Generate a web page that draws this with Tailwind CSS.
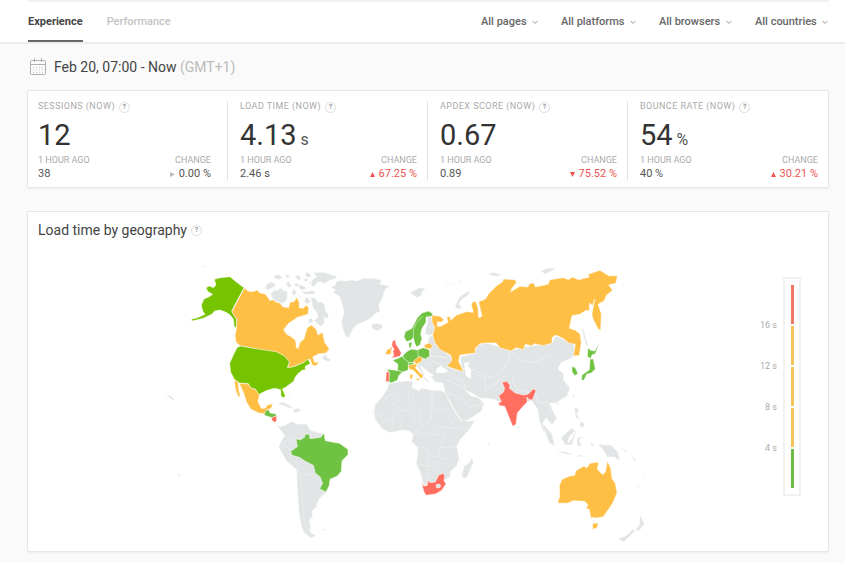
<!DOCTYPE html>
<html lang="en">
    <head>
        <meta charset="UTF-8" />
        <meta name="viewport" content="width=device-width, initial-scale=1.0" />
        <title>Experience</title>
        <script src="https://cdn.jsdelivr.net/npm/@tailwindcss/browser@4"></script>
    </head>
    <body class="min-h-screen bg-[#fafafa] font-['Roboto',sans-serif] text-[#444]">
        <header class="border-b-2 border-[#ececec] bg-white px-4 sm:pl-7">
            <div class="border-t-2 border-[#f1f1f1]"></div>
            <div class="flex h-10 items-stretch justify-between">
                <nav class="flex gap-6 text-[11px] font-medium">
                    <a href="#experience" class="flex items-center border-b-2 border-[#666] pt-0.5 font-bold text-[#444]">Experience</a>
                    <a href="#performance" class="flex items-center border-b-2 border-transparent pt-0.5 text-[#c4c4c4]">Performance</a>
                </nav>
                <form class="flex items-center gap-[22px] text-[11px] font-medium text-[#666]">
                    <label class="relative flex items-center">
                        <select aria-label="Pages" class="appearance-none bg-transparent pr-3">
                            <option>All pages</option>
                        </select>
                        <svg class="pointer-events-none absolute right-0 size-2" viewBox="0 0 8 8" fill="none" stroke="#999"><path d="M1.5 3 4 5.5 6.5 3" /></svg>
                    </label>
                    <label class="relative flex items-center">
                        <select aria-label="Platforms" class="appearance-none bg-transparent pr-3">
                            <option>All platforms</option>
                        </select>
                        <svg class="pointer-events-none absolute right-0 size-2" viewBox="0 0 8 8" fill="none" stroke="#999"><path d="M1.5 3 4 5.5 6.5 3" /></svg>
                    </label>
                    <label class="relative flex items-center">
                        <select aria-label="Browsers" class="appearance-none bg-transparent pr-3">
                            <option>All browsers</option>
                        </select>
                        <svg class="pointer-events-none absolute right-0 size-2" viewBox="0 0 8 8" fill="none" stroke="#999"><path d="M1.5 3 4 5.5 6.5 3" /></svg>
                    </label>
                    <label class="relative flex items-center">
                        <select aria-label="Countries" class="appearance-none bg-transparent pr-3">
                            <option>All countries</option>
                        </select>
                        <svg class="pointer-events-none absolute right-0 size-2" viewBox="0 0 8 8" fill="none" stroke="#999"><path d="M1.5 3 4 5.5 6.5 3" /></svg>
                    </label>
                </form>
            </div>
        </header>

        <main class="px-4 pb-3 sm:pl-[27px]">
            <div class="flex h-[46px] items-center gap-2 pl-[3px] text-sm">
                <svg class="h-[18px] w-4" viewBox="0 0 16 18" fill="none" stroke="#b0b0b0">
                    <rect x=".5" y="2.5" width="15" height="14" rx="1" />
                    <path d="M.5 6.5h15M4.500 0v4M11.500 0v4" />
                    <path d="M3 9.500h10M3 12h10M3 14.500h10" stroke="#ccc" stroke-dasharray="1 2" />
                </svg>
                <p>Feb 20, 07:00 - Now <span class="text-[#bbb]">(GMT+1)</span></p>
            </div>

            <section class="grid grid-cols-2 rounded-xs border border-[#e6e6e6] bg-white pt-2.5 pb-1.5 shadow-xs sm:grid-cols-4 sm:divide-x sm:divide-[#e4e4e4]">
                <article class="pr-4 pl-2.5">
                    <h2 class="flex h-3 items-center gap-1 text-[9px] tracking-wider text-[#aaa]">SESSIONS (NOW)
                        <button type="button" aria-label="About sessions" class="size-[11px] rounded-full border border-[#ddd] text-[7px] leading-none font-bold text-[#999]">?</button>
                    </h2>
                    <p class="mt-1 text-[29px] leading-9 text-[#333]">12</p>
                    <dl class="flex justify-between text-[11px] leading-[14px] text-[#555]">
                        <div><dt class="text-[9px] leading-[14px] text-[#aaa]">1 HOUR AGO</dt><dd>38</dd></div>
                        <div class="text-right"><dt class="text-[9px] leading-[14px] text-[#aaa]">CHANGE</dt><dd><svg class="mr-1 inline size-[5px] align-middle" viewBox="0 0 6 6" fill="#bbb"><path d="M0 0 6 3 0 6Z" /></svg>0.00 %</dd></div>
                    </dl>
                </article>
                <article class="pr-2.5 pl-3">
                    <h2 class="flex h-3 items-center gap-1 text-[9px] tracking-wider text-[#aaa]">LOAD TIME (NOW)
                        <button type="button" aria-label="About load time" class="size-[11px] rounded-full border border-[#ddd] text-[7px] leading-none font-bold text-[#999]">?</button>
                    </h2>
                    <p class="mt-1 flex items-baseline gap-1 text-[29px] leading-9 text-[#333]">4.13 <span class="text-base leading-5 text-[#555]">s</span></p>
                    <dl class="flex justify-between text-[11px] leading-[14px] text-[#555]">
                        <div><dt class="text-[9px] leading-[14px] text-[#aaa]">1 HOUR AGO</dt><dd>2.46 s</dd></div>
                        <div class="text-right"><dt class="text-[9px] leading-[14px] text-[#aaa]">CHANGE</dt><dd class="text-[#ee5551]"><svg class="mr-1 inline size-[5px] align-middle" viewBox="0 0 6 6" fill="currentColor"><path d="M0 6 3 0 6 6Z" /></svg>67.25 %</dd></div>
                    </dl>
                </article>
                <article class="pr-2.5 pl-3">
                    <h2 class="flex h-3 items-center gap-1 text-[9px] tracking-wider text-[#aaa]">APDEX SCORE (NOW)
                        <button type="button" aria-label="About apdex score" class="size-[11px] rounded-full border border-[#ddd] text-[7px] leading-none font-bold text-[#999]">?</button>
                    </h2>
                    <p class="mt-1 text-[29px] leading-9 text-[#333]">0.67</p>
                    <dl class="flex justify-between text-[11px] leading-[14px] text-[#555]">
                        <div><dt class="text-[9px] leading-[14px] text-[#aaa]">1 HOUR AGO</dt><dd>0.89</dd></div>
                        <div class="text-right"><dt class="text-[9px] leading-[14px] text-[#aaa]">CHANGE</dt><dd class="text-[#ee5551]"><svg class="mr-1 inline size-[5px] align-middle" viewBox="0 0 6 6" fill="currentColor"><path d="M0 0H6L3 6Z" /></svg>75.52 %</dd></div>
                    </dl>
                </article>
                <article class="pr-2.5 pl-3">
                    <h2 class="flex h-3 items-center gap-1 text-[9px] tracking-wider text-[#aaa]">BOUNCE RATE (NOW)
                        <button type="button" aria-label="About bounce rate" class="size-[11px] rounded-full border border-[#ddd] text-[7px] leading-none font-bold text-[#999]">?</button>
                    </h2>
                    <p class="mt-1 flex items-baseline gap-1 text-[29px] leading-9 text-[#333]">54 <span class="text-base leading-5 text-[#555]">%</span></p>
                    <dl class="flex justify-between text-[11px] leading-[14px] text-[#555]">
                        <div><dt class="text-[9px] leading-[14px] text-[#aaa]">1 HOUR AGO</dt><dd>40 %</dd></div>
                        <div class="text-right"><dt class="text-[9px] leading-[14px] text-[#aaa]">CHANGE</dt><dd class="text-[#ee5551]"><svg class="mr-1 inline size-[5px] align-middle" viewBox="0 0 6 6" fill="currentColor"><path d="M0 6 3 0 6 6Z" /></svg>30.21 %</dd></div>
                    </dl>
                </article>
            </section>

            <section class="mt-[23px] rounded-xs border border-[#e6e6e6] bg-white pt-2 pr-[27px] pb-1.5 pl-2.5 shadow-xs">
                <h2 class="flex h-5 items-center gap-1 text-sm">Load time by geography
                    <button type="button" aria-label="About load time by geography" class="size-[11px] rounded-full border border-[#ddd] text-[7px] leading-none font-bold text-[#999]">?</button>
                </h2>
                <div class="mt-5 flex items-start">
                    <svg class="min-w-0 flex-1" viewBox="38 260 722 285" role="img" aria-label="World map of load times" stroke="#fff" stroke-width="1" stroke-linejoin="round">
                        <!-- Asia and eastern Europe -->
                        <g fill="#e2e5e6" stroke-width=".5">
                            <path d="M429 337 436 334 442 350 452 357 453 362 447 367 462 371 460 357 475 353 477 345 487 343 500 347 510 351 523 347 545 344 552 342 556 336 567 341 574 344 575 353 572 358 565 361 561 363 558 369 564 374 563 379 570 388 567 396 556 403 550 403 553 411 557 418 552 425 546 418 543 423 549 435 543 431 539 420 538 410 532 401 524 402 500 402 493 399 480 398 470 392 466 391 471 396 477 397 484 403 482 411 463 423 454 409 445 393 443 383 434 382 432 377 428 377 429 383 425 380 420 370 416 365 422 361 419 356 429 357 430 349 427 346Z" />
                            <path d="M568 443 572 439 575 431 569 437ZM542 423 546 427 552 434 555 446 549 443ZM555 450 567 452 574 455 565 454ZM561 438 571 428 576 431 572 445 565 445ZM577 438 584 436 579 440 582 446 577 446ZM574 407 579 409 577 415 581 420 576 418ZM581 421 585 424 583 428 579 425ZM556 404 559 402 559 405ZM573 393 575 396 573 398ZM518 425 520 427 518 429ZM598 444 604 445 611 445 618 452 620 461 614 457 607 457 604 451ZM590 443 594 444 592 447ZM574 456 581 455 585 457ZM622 448 628 452 626 453Z" />
                        </g>
                        <g fill="none" stroke="#f0f2f2" stroke-width=".7">
                            <path d="M430 346 442 345M430 356 451 358M425 365 433 361 442 366M427 350 436 353M510 351 518 359 532 363 545 358 555 354M460 368 475 370 488 378 500 374 508 362 510 351M473 373 485 379 486 390 500 380 507 374M452 378 463 381 466 391M447 379 456 384 470 393M512 376 516 389 526 392 533 394M535 394 539 403 547 402 552 411M447 393 458 397 470 407 484 403" />
                            <path fill="#fff" d="M437 368 441 366 447 370 448 372 443 373 437 373 436 371ZM464 363 470 362 468 366 471 370 471 379 466 376 465 370ZM420 365 425 378 430 382 428 377 433 376 434 375 430 373Z" stroke="none" />
                        </g>

                        <!-- North America -->
                        <g transform="translate(180 255) scale(.33333)" fill="#e2e5e6" stroke-width="1.500">
                            <path d="M254 100 262 86 274 80 288 88 278 98 264 106ZM272 116 284 104 292 108 300 98 312 108 322 108 322 134 308 146 290 140 278 132ZM280 64 294 58 308 66 298 74 286 72ZM316 58 330 62 326 70 318 68ZM316 84 326 80 336 94 326 98ZM344 62 358 60 364 72 354 76ZM340 88 354 84 358 92 350 96ZM340 102 352 110 344 122 334 116ZM356 88 370 92 380 100 368 106 356 100ZM360 108 382 110 394 106 408 112 400 118 374 118ZM372 72 384 70 384 78 374 80ZM376 52 390 54 394 64 384 68 376 62ZM400 52 430 52 450 58 474 66 462 72 448 76 436 86 420 80 408 86 404 96 392 90 396 74 410 66ZM388 78 396 82 390 94ZM374 130 382 126 392 138 386 146 374 144ZM392 126 408 130 414 142 426 140 434 150 436 166 446 180 444 192 432 188 434 204 424 214 412 208 402 196 414 188 410 172 398 158ZM384 192 396 190 400 200 388 206ZM352 116 362 124 360 130ZM426 308 438 296 442 308 454 314 446 320 430 314ZM294 446 308 440 330 452 344 462 326 458ZM338 466 354 458 364 468 344 474ZM320 418 334 432 328 430ZM64 34 74 32 74 38ZM154 230 164 246 158 242ZM14 202 22 200 20 204ZM384 468 386 484 384 484Z" />
                            <path fill="#76c400" d="M103 73 122 68 150 65 168 80 192 98 155 168 164 184 170 192 170 218 163 216 160 192 148 178 138 172 120 165 104 168 95 178 70 190 36 198 34 193 52 188 75 178 68 168 64 150 72 132 90 124 98 118 84 110 78 98 88 93 100 98 108 90Z" />
                            <path fill="#ffbf44" d="M193 99 204 108 215 110 232 106 240 114 256 117 264 128 270 137 278 134 290 142 300 144 308 155 326 158 330 142 342 140 350 127 357 140 358 158 370 160 378 150 386 158 384 178 366 183 352 187 340 196 326 205 311 224 320 238 335 246 347 257 349 278 355 280 360 262 372 252 376 236 382 218 394 210 408 222 414 240 428 232 434 262 448 282 438 294 415 297 398 306 404 322 418 322 408 333 396 330 390 312 375 320 345 333 322 340 328 322 310 302 288 292 240 284 180 272 168 262 165 240 170 218 170 190 164 184 156 170Z" />
                            <path fill="#76c400" d="M172 277 182 273 240 283 288 290 312 302 328 320 322 339 345 334 372 322 384 312 391 326 376 334 376 344 366 346 352 358 344 370 342 378 318 396 307 402 316 422 312 428 303 424 302 404 284 400 262 406 244 414 236 420 226 402 212 400 205 386 178 384 164 374 152 352 149 325 160 300Z" />
                            <path fill="#ffbf44" d="M178 385 205 387 213 399 226 403 238 420 234 440 244 460 256 460 262 450 278 446 274 460 262 464 256 476 236 474 212 462 200 442 190 412ZM163 375 174 380 176 400 181 426 174 424 166 402Z" />
                            <path fill="#6fc242" d="M258 466 267 464 270 474 286 476 290 484 276 488 262 484 252 480Z" />
                            <path fill="#ff6e5e" d="M274 488 290 483 290 496 284 503 276 496Z" />
                        </g>

                        <!-- South America -->
                        <g transform="translate(250 410) scale(.33333)" fill="#e2e5e6" stroke-width="1.500">
                            <path d="M74 38 90 50 104 46 126 34 140 42 170 42 180 60 212 70 222 72 240 208 230 246 212 262 202 278 200 290 186 304 188 320 178 330 182 350 180 366 200 378 182 384 160 366 152 340 146 300 142 240 140 180 110 154 86 112 92 96 104 76ZM212 358 228 356 222 362ZM38 94 44 92 44 98Z" />
                            <path fill="none" stroke="#f0f2f2" d="M108 82 140 98M96 104 120 118M138 146 144 182 152 196 190 190 212 216M150 200 156 260 162 330 178 364M180 60 186 84M202 68 204 84M210 236 232 246" />
                            <path fill="#6fc242" d="M138 86 150 90 164 82 164 74 178 72 180 86 212 82 222 70 226 92 246 96 268 100 294 118 294 134 276 152 274 184 262 198 240 208 238 226 228 246 209 236 218 220 210 200 196 190 190 166 166 154 148 142 126 136 122 124 142 110Z" />
                        </g>

                        <!-- Greenland and western Europe -->
                        <g transform="translate(320 255) scale(.33333)" fill="#e2e5e6" stroke-width="1.500">
                            <path d="M30 95 45 92 48 80 62 76 80 78 95 74 110 78 130 70 160 70 185 76 180 88 210 92 195 104 190 122 182 140 176 152 182 170 168 174 152 190 130 202 112 208 98 222 86 250 76 242 68 222 64 200 72 172 66 148 58 124 40 114 46 104ZM152 210 168 204 188 210 186 220 172 228 158 222ZM270 112 286 104 298 98 318 100 306 110 304 122 290 128 280 120ZM376 92 386 88 384 94ZM396 84 406 82 402 88ZM412 80 424 78 420 84ZM448 106 432 116 416 128 410 144 404 156 420 164 424 154 416 148 424 134 448 118ZM322 186 336 184 342 216 346 232 328 242 316 236 316 222 322 208Z" />
                            <path fill="#6fc242" d="M338 176 326 168 306 174 292 188 282 208 276 220 256 230 252 246 260 260 272 256 280 248 284 264 290 276 300 270 306 250 302 238 306 220 318 202 318 186 336 184ZM266 264 276 260 274 276 268 280Z" />
                            <path fill="none" d="M306 184 288 206 280 224 280 250" />
                            <path fill="#ff6e5e" d="M218 258 226 254 228 268 236 280 244 294 240 304 214 309 222 300 218 290 222 284 215 270ZM208 280 216 276 216 286Z" />
                            <path fill="#ffbf44" d="M200 284 214 280 214 296 196 300Z" />
                            <path fill="#6fc242" d="M248 302 260 290 274 282 296 286 298 306 284 322 266 324 254 314Z" />
                            <path fill="#6fc242" d="M218 316 234 310 246 304 258 316 268 322 264 346 246 352 232 346 234 328ZM294 284 310 278 328 284 329 304 316 312 294 304Z" />
                            <path fill="#6fc242" d="M199 343 222 345 248 350 236 362 232 376 214 384 206 380 208 352ZM264 324 280 322 282 328 268 334Z" />
                            <path fill="#ff6e5e" d="M199 350 208 352 207 380 197 380Z" />
                            <path fill="#ffbf44" d="M280 318 298 304 308 310 304 320 290 328ZM264 332 284 326 292 330 286 338 298 352 310 362 304 372 294 360 280 346 268 342ZM270 358 278 358 277 372 270 372ZM286 372 298 370 296 378ZM312 270 328 264 338 272 332 282 316 280Z" />
                        </g>

                        <!-- Russia, Japan, Korea -->
                        <g transform="translate(420 255) scale(.33333)" fill="#e2e5e6" stroke-width="1.500">
                            <path d="M484 220 490 222 506 278 498 270ZM362 48 380 40 410 38 398 46 376 58ZM206 56 220 52 248 60 232 64 214 62ZM526 32 538 30 534 36ZM604 86 614 86 610 90Z" />
                            <path fill="#fff" d="M422 332 430 326 442 324 448 332 434 342 438 350 426 346Z" />
                            <path fill="#ffbf44" d="M36 181 60 184 72 194 64 202 52 200 52 214 62 214 84 202 80 186 90 184 92 196 110 180 140 170 160 172 154 150 158 140 168 140 174 160 176 188 186 184 180 158 176 140 196 132 206 116 230 92 248 80 250 72 284 74 290 82 276 100 272 110 300 94 324 96 328 86 342 84 346 96 384 88 390 74 430 68 446 74 456 66 476 74 508 66 504 58 540 46 566 62 592 62 588 84 566 90 578 106 560 120 552 138 534 148 544 176 542 226 534 222 518 190 516 176 524 132 518 152 508 144 508 168 498 166 480 178 456 182 448 220 466 226 480 236 484 262 478 302 460 302 466 268 446 264 432 252 408 240 396 248 396 264 370 272 344 266 334 272 316 268 310 284 290 278 272 288 240 278 228 264 200 264 180 266 166 280 166 294 120 300 116 318 130 350 104 342 80 334 96 316 92 300 60 284 44 262 38 240 44 218 36 200Z" />
                            <path fill="#6fc242" d="M504 278 512 286 524 288 538 264 526 296 516 300 512 310 502 306ZM510 312 520 312 526 342 514 354 500 358 492 376 484 374 486 360 500 350 508 344ZM456 334 466 338 474 356 464 362 456 350Z" />
                        </g>

                        <!-- Africa -->
                        <g transform="translate(360 360) scale(.33333)" fill="#e2e5e6" stroke-width="1.500">
                            <path d="M84 72 112 66 146 62 160 66 156 82 176 92 186 84 212 90 244 92 258 100 270 130 290 162 304 184 344 182 330 206 300 240 290 258 298 296 290 318 272 334 270 350 230 376 190 374 182 340 168 310 174 280 172 262 154 244 160 224 148 214 130 210 90 218 66 206 44 176 42 152 44 136 66 110 84 84ZM312 318 326 310 336 294 341 306 322 350 312 357 305 346Z" />
                            <path fill="none" stroke="#f0f2f2" d="M80 92 108 96 80 112 64 130M76 112 112 142 130 150M156 84 158 130 182 148M216 92 216 148 214 180M216 148 272 148M146 90 148 126M44 160 76 164 84 178M66 184 100 182 100 214M84 178 130 150 160 156 158 180 180 176M122 180 124 210M160 224 180 200 214 182 238 200 290 206M170 222 200 220 240 224 256 220 270 244M182 148 178 196M174 260 200 264 206 286 236 290 240 262 292 262M190 316 226 320 240 300 270 290M204 290 204 366M226 320 250 344M256 220 240 260M290 162 274 190 300 204 332 204M168 312 204 318" />
                            <path fill="#ff6e5e" d="M185 370 192 378 202 376 204 360 210 368 226 366 236 346 248 340 254 346 252 362 258 372 244 392 226 402 198 406 192 396Z" />
                            <ellipse cx="235" cy="378" rx="7" ry="6" fill="#e2e5e6" />
                        </g>

                        <!-- Australia and New Zealand -->
                        <g transform="translate(520 440) scale(.33333)" fill="#e2e5e6" stroke-width="1.500">
                            <path fill="#ffbf44" d="M126 118 150 108 164 106 168 92 192 78 200 84 210 70 236 66 232 88 248 104 256 96 262 64 272 84 276 116 286 130 291 158 278 190 250 230 232 234 212 232 208 208 198 206 204 194 194 184 160 182 142 190 112 189 119 170 118 138ZM218 250 236 250 230 264 218 268Z" />
                            <path d="M360 224 374 252 356 274 346 270 358 256ZM340 266 344 274 312 306 294 296 320 286ZM344 132 360 140 358 144ZM328 40 348 60 344 64ZM366 94 374 100 370 102ZM408 120 414 118 414 124Z" />
                        </g>
                        <path fill="#e2e5e6" stroke="none" d="M166 394 172 397 175 401 170 398ZM177 474 181 475 179 476ZM487 444 490 442 489 445ZM373 412 374 415 372 413Z" />
                        <!-- India -->
                        <path transform="translate(460 335) scale(.33333)" fill="#ff6e5e" stroke-width="1.500" d="M126 142 140 139 150 150 148 160 166 174 190 180 204 178 220 162 228 166 218 194 208 194 200 186 202 200 184 220 172 234 168 268 158 274 146 244 134 214 120 212 114 204 124 200 116 182 130 172 134 160Z" />
                    </svg>

                    <!-- Legend -->
                    <div class="flex text-[9px] text-[#aaa]">
                        <ul class="pt-[45px] pr-1.5 text-right">
                            <li class="flex h-[41px] items-center justify-end">16 s</li>
                            <li class="flex h-[41px] items-center justify-end">12 s</li>
                            <li class="flex h-[41px] items-center justify-end">8 s</li>
                            <li class="flex h-[41px] items-center justify-end">4 s</li>
                        </ul>
                        <div class="mt-[17px] flex w-[18px] flex-col items-center gap-0.5 border-2 border-[#f1f1f1] py-1.5">
                            <span class="h-[39px] w-[3px] bg-[#f0776a]"></span>
                            <span class="h-[39px] w-[3px] bg-[#f6c25c]"></span>
                            <span class="h-[39px] w-[3px] bg-[#f6c25c]"></span>
                            <span class="h-[39px] w-[3px] bg-[#f6c25c]"></span>
                            <span class="h-[39px] w-[3px] bg-[#6dbb49]"></span>
                        </div>
                    </div>
                </div>
            </section>
        </main>
    </body>
</html>
